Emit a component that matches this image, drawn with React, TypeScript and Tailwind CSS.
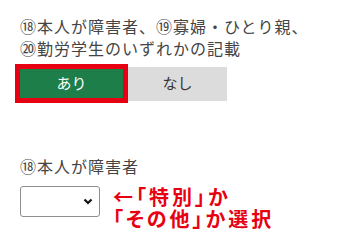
import React from "react";

export default function App() {
  return (
    <div className="w-[360px] h-[240px] bg-white overflow-hidden pl-[20px] pt-[15px] text-[#444] font-['Noto_Sans_CJK_JP','Noto_Sans',sans-serif]">
      <p className="text-[16px] leading-[22px] tracking-[1px] whitespace-nowrap">
        ⑱本人が障害者、⑲寡婦・ひとり親、
        <br />
        ⑳勤労学生のいずれかの記載
      </p>
      <div className="flex items-center mt-[5px] -ml-[5px]">
        <div className="w-[113px] h-[39px] border-[5px] border-[#e60012] bg-[#1e7e4a] flex items-center justify-center text-white text-[15px]">
          あり
        </div>
        <div className="w-[99px] h-[34px] bg-[#dcdcdc] flex items-center justify-center text-[#333] text-[15px]">
          なし
        </div>
      </div>
      <p className="mt-[52px] text-[16px] leading-[22px] tracking-[1px] whitespace-nowrap">⑱本人が障害者</p>
      <div className="flex items-start mt-[9px]">
        <div className="w-[80px] h-[31px] border border-[#8f8f8f] rounded-[3px] bg-white flex items-center justify-end pr-[6px]">
          <svg width="10" height="7" viewBox="0 0 10 7">
            <path d="M1.5 1.5 L5 5 L8.5 1.5" fill="none" stroke="#111" strokeWidth="2.2" />
          </svg>
        </div>
        <p className="ml-[13px] text-[#e60012] font-bold text-[20px] leading-[22px] tracking-[3px] whitespace-nowrap [font-feature-settings:'palt']">
          ←「特別」か
          <br />
          「その他」か選択
        </p>
      </div>
    </div>
  );
}
